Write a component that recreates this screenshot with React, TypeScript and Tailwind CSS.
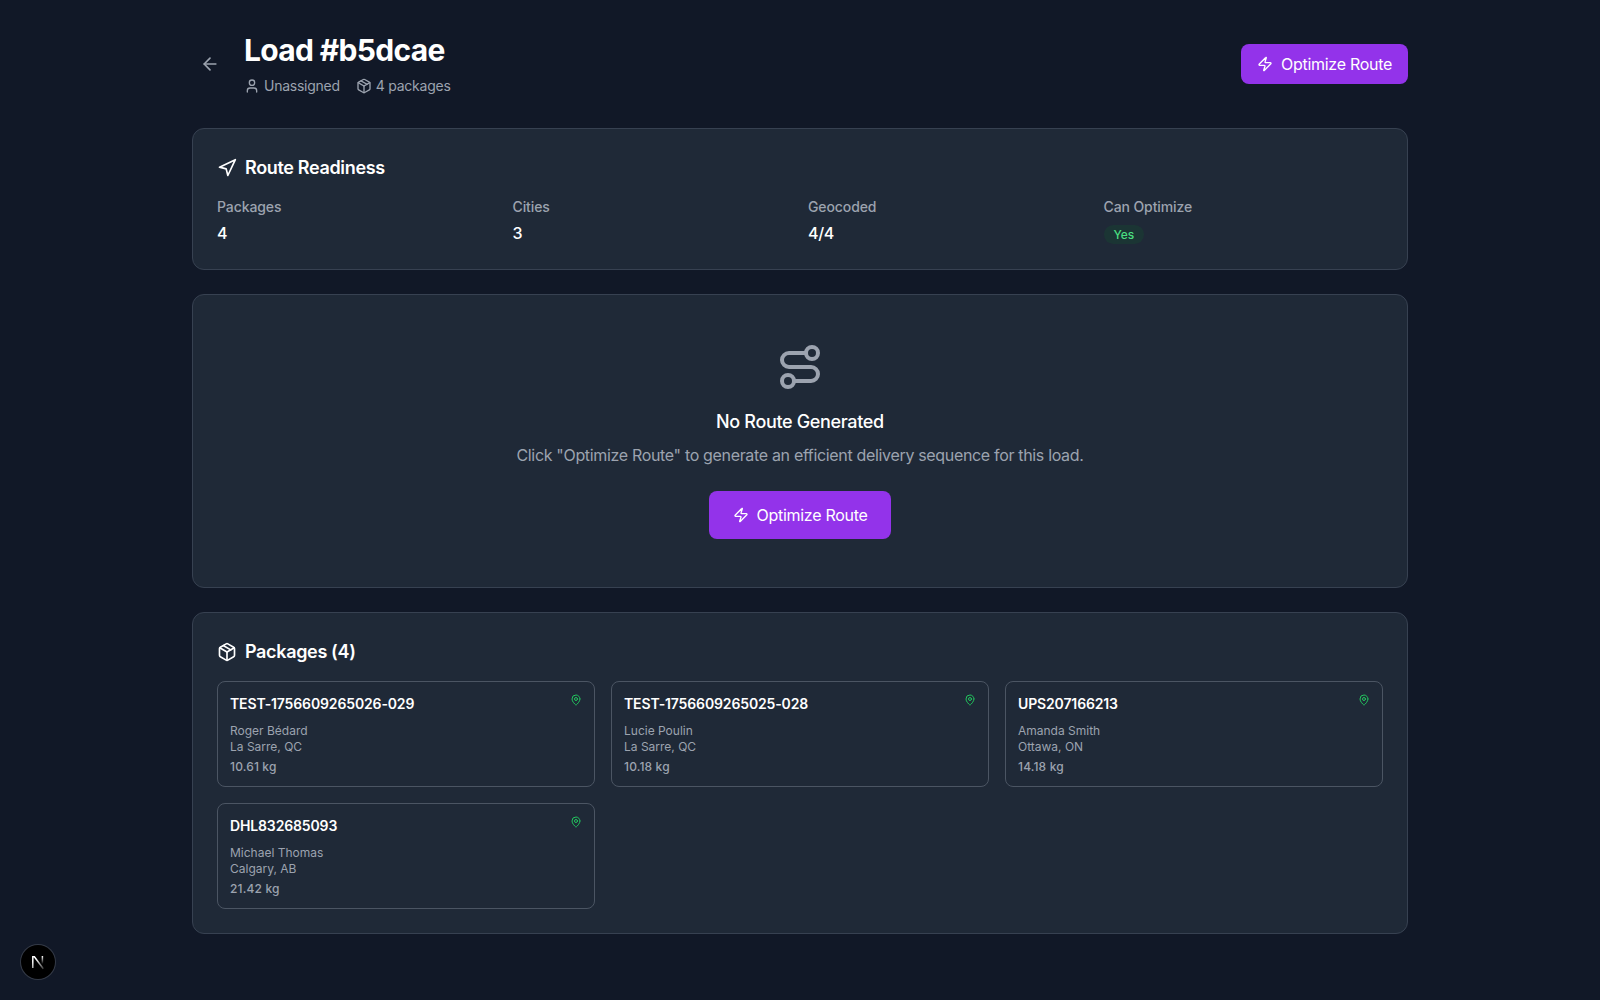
import { ArrowLeft, MapPin, Navigation, Package, Route, User, Zap } from 'lucide-react'

const packages = [
  { id: 'TEST-1756609265026-029', name: 'Roger Bédard', city: 'La Sarre, QC', weight: '10.61 kg' },
  { id: 'TEST-1756609265025-028', name: 'Lucie Poulin', city: 'La Sarre, QC', weight: '10.18 kg' },
  { id: 'UPS207166213', name: 'Amanda Smith', city: 'Ottawa, ON', weight: '14.18 kg' },
  { id: 'DHL832685093', name: 'Michael Thomas', city: 'Calgary, AB', weight: '21.42 kg' },
]

const cardCls = 'rounded-xl border border-[#374151] bg-[#1f2937] p-6'
const buttonCls = 'flex items-center gap-2 rounded-lg bg-[#9333ea] text-base tracking-[-0.29px] text-white'
const cardTitleCls = 'mb-4 flex items-center gap-2 pt-px text-lg leading-[27px] font-semibold tracking-[-0.34px] text-white'
const labelCls = 'text-sm font-medium tracking-[-0.1px] text-[#9ca3af]'

function Stat({ label, value }: { label: string; value: string }) {
  return (
    <div>
      <p className={labelCls}>{label}</p>
      <p className="mt-1 text-base font-medium tracking-[-0.3px] text-white">{value}</p>
    </div>
  )
}

function PackageCard({ pkg }: { pkg: (typeof packages)[number] }) {
  return (
    <div className="rounded-lg border border-[#4b5563] p-3">
      <div className="flex items-start justify-between">
        <p className="text-sm font-semibold tracking-[-0.14px] text-white">{pkg.id}</p>
        <MapPin size={12} className="text-[#22c55e]" />
      </div>
      <p className="mt-2 pt-px text-xs leading-[15px] text-[#9ca3af]">{pkg.name}</p>
      <p className="pt-px text-xs leading-[15px] text-[#9ca3af]">{pkg.city}</p>
      <p className="mt-1 pt-px text-xs leading-[15px] font-medium tracking-[0.15px] text-[#9ca3af]">{pkg.weight}</p>
    </div>
  )
}

export default function App() {
  return (
    <div className="min-h-screen bg-[#111827] font-['Inter',sans-serif]">
      <div className="mx-auto max-w-7xl px-8 py-8">
        {/* Header */}
        <div className="mb-8 flex items-center justify-between">
          <div className="flex items-center gap-4">
            <button className="p-2 text-[#9ca3af]">
              <ArrowLeft size={20} />
            </button>
            <div>
              <h1 className="text-3xl font-bold tracking-[-0.68px] text-white">Load #b5dcae</h1>
              <div className="mt-2 flex items-center gap-4 text-sm tracking-[-0.25px] text-[#9ca3af]">
                <span className="flex items-center gap-1">
                  <User size={16} />
                  Unassigned
                </span>
                <span className="flex items-center gap-1">
                  <Package size={16} />
                  4 packages
                </span>
              </div>
            </div>
          </div>
          <button className={`${buttonCls} px-4 py-2`}>
            <Zap size={16} />
            Optimize Route
          </button>
        </div>

        <div className="flex flex-col gap-6">
          {/* Route readiness */}
          <div className={cardCls}>
            <h2 className={cardTitleCls}>
              <Navigation size={20} />
              Route Readiness
            </h2>
            <div className="grid grid-cols-4 gap-4">
              <Stat label="Packages" value="4" />
              <Stat label="Cities" value="3" />
              <Stat label="Geocoded" value="4/4" />
              <div>
                <p className={labelCls}>Can Optimize</p>
                <p className="mt-1 text-base">
                  <span className="rounded-full bg-[#14532d]/30 px-2.5 py-0.5 text-xs font-medium text-[#4ade80]">
                    Yes
                  </span>
                </p>
              </div>
            </div>
          </div>

          {/* Empty route */}
          <div className="flex flex-col items-center rounded-xl border border-[#374151] bg-[#1f2937] py-12">
            <Route size={48} className="mb-4 text-[#9ca3af]" />
            <h3 className="mb-2 pt-px text-lg leading-[27px] font-medium tracking-[-0.34px] text-white">No Route Generated</h3>
            <p className="mb-6 text-base tracking-[-0.33px] text-[#9ca3af]">
              Click "Optimize Route" to generate an efficient delivery sequence for this load.
            </p>
            <button className={`${buttonCls} px-6 py-3`}>
              <Zap size={16} />
              Optimize Route
            </button>
          </div>

          {/* Packages */}
          <div className={cardCls}>
            <h2 className={cardTitleCls}>
              <Package size={20} />
              Packages (4)
            </h2>
            <div className="grid grid-cols-3 gap-4">
              {packages.map(pkg => (
                <PackageCard key={pkg.id} pkg={pkg} />
              ))}
            </div>
          </div>
        </div>
      </div>

      {/* Next.js dev badge */}
      <div className="fixed bottom-[21px] left-[21px] flex size-[34px] items-center justify-center rounded-full bg-black ring-1 ring-white/15">
        <svg width="16" height="16" viewBox="0 0 16 16" fill="none">
          <defs>
            <linearGradient id="next-fade" x1="12.5" y1="2" x2="12.5" y2="10" gradientUnits="userSpaceOnUse">
              <stop stopColor="#fff" />
              <stop offset="1" stopColor="#fff" stopOpacity="0" />
            </linearGradient>
            <linearGradient id="next-slant" x1="6" y1="5" x2="14" y2="15" gradientUnits="userSpaceOnUse">
              <stop stopColor="#fff" />
              <stop offset="1" stopColor="#fff" stopOpacity="0.2" />
            </linearGradient>
          </defs>
          <path d="M2.8 14V2.7h1.6l8.9 12.1" stroke="url(#next-slant)" strokeWidth="1.5" />
          <path d="M12.4 2v8" stroke="url(#next-fade)" strokeWidth="1.5" />
        </svg>
      </div>
    </div>
  )
}
